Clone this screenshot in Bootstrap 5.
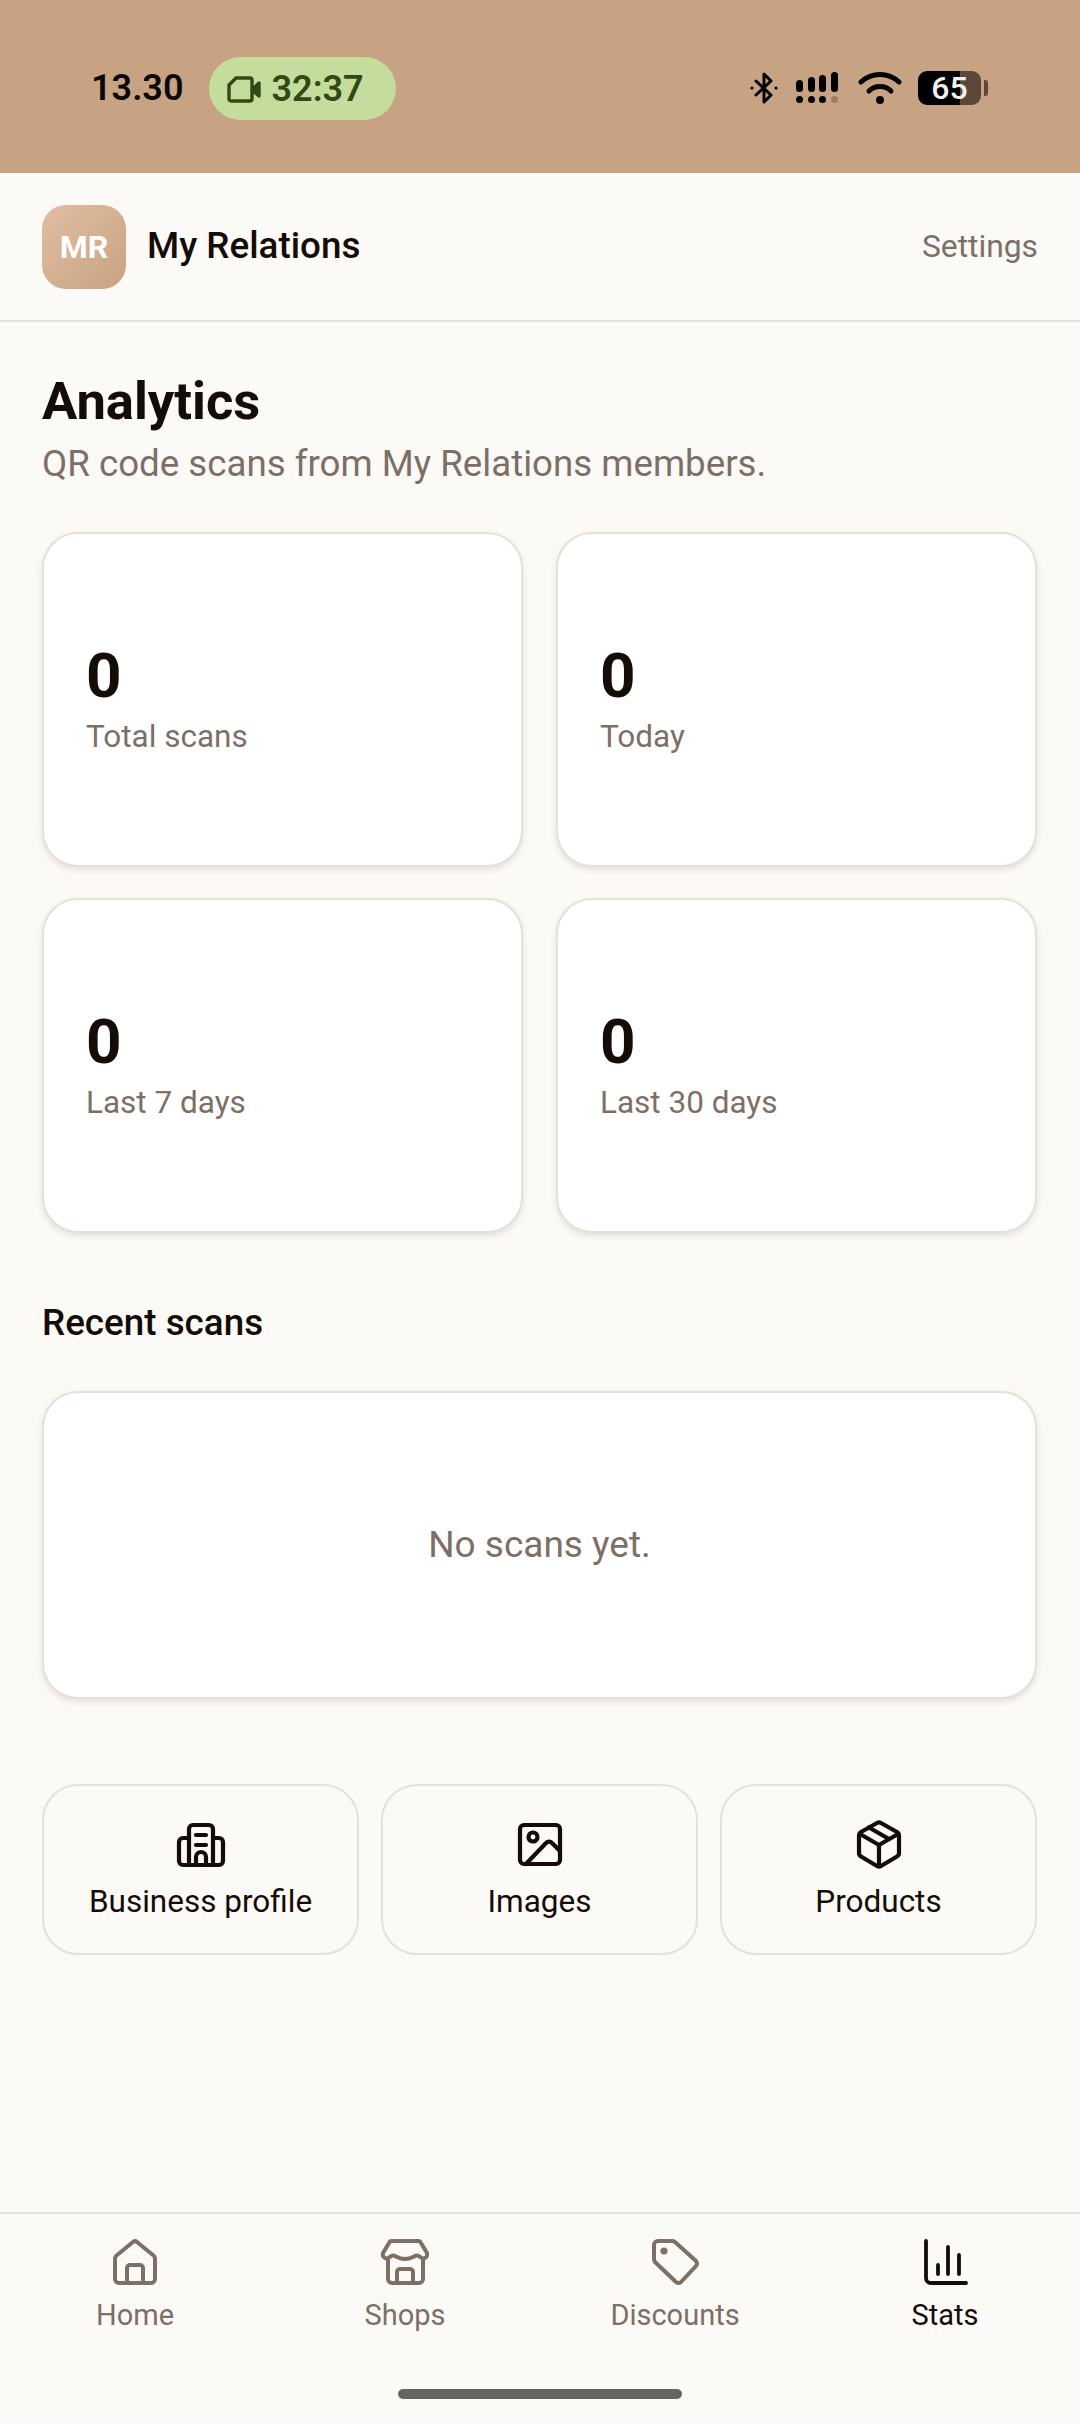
<!DOCTYPE html>
<html lang="en">
<head>
    <meta charset="UTF-8">
    <meta name="viewport" content="width=device-width, initial-scale=1.0">
    <title>My Relations - Analytics</title>
    <link href="https://cdn.jsdelivr.net/npm/bootstrap@5.3.5/dist/css/bootstrap.min.css" rel="stylesheet">
    <style>
        body {
            font-family: Roboto, "Liberation Sans", sans-serif;
            background-color: #fcfaf7;
            color: #140c07;
        }
        svg { display: block; }
        .app-shell { height: 2424px; }
        .status-strip {
            height: 173px;
            background-color: #c7a383;
            padding: 57px 92px 0 91px;
            align-items: flex-start;
        }
        .status-time { font-size: 36px; font-weight: 600; color: #0a0806; line-height: 62px; }
        .call-pill {
            height: 63px;
            width: 187px;
            margin-left: 25px;
            background-color: #c4dd9d;
            color: #2f4a14;
            font-size: 36px;
            font-weight: 600;
            padding-left: 17px;
            gap: 10px;
        }
        .status-icons { gap: 18px; height: 62px; }
        .batt-wrap { margin-left: -2px; }
        .batt-body {
            width: 63px;
            height: 34px;
            border-radius: 9px;
            background: linear-gradient(90deg, #000 0 66%, #5c4838 66% 100%);
            color: #f1f1f1;
            font-size: 32px;
            font-weight: 500;
            line-height: 34px;
            text-align: center;
        }
        .batt-cap { width: 4px; height: 16px; background-color: #5c4838; border-radius: 0 3px 3px 0; margin-left: 3px; }
        .top-head {
            height: 149px;
            padding: 32px 42px 0;
            align-items: flex-start;
            border-bottom: 2px solid #e6e0da;
        }
        .avatar-box {
            width: 84px;
            height: 84px;
            border-radius: 24px;
            background: linear-gradient(135deg, #e1bea2, #c7a383);
            color: #fff;
            font-size: 32px;
            font-weight: 700;
        }
        .brand-name { font-size: 36.8px; font-weight: 500; margin-left: 21px; line-height: 82px; }
        .settings-link { font-size: 31.8px; color: #7d6f66; line-height: 82px; text-decoration: none; }
        .main-pad { padding: 49px 43px 0 42px; }
        .page-title { font-size: 52.5px; font-weight: 700; line-height: 60px; margin: 0; }
        .page-sub { font-size: 36.7px; color: #7d6f66; line-height: 46px; margin: 10px 0 45px; }
        .stat-row { --bs-gutter-x: 33px; --bs-gutter-y: 31px; }
        .stat-card, .empty-card {
            border: 2px solid #e6e0da;
            border-radius: 36px;
            background-color: #fff;
            box-shadow: 0 3px 6px rgba(60, 40, 25, .12);
        }
        .stat-card { height: 335px; padding: 0 42px; }
        .stat-num { font-size: 62px; font-weight: 700; line-height: 72px; margin-top: -2px; }
        .stat-label { font-size: 31.5px; color: #7d6f66; line-height: 40px; margin-top: 5px; }
        .section-head { font-size: 36.8px; font-weight: 500; line-height: 44px; margin: 68px 0 46px; }
        .empty-card { height: 308px; font-size: 37px; color: #7d6f66; }
        .quick-row { gap: 22px; margin-top: 85px; }
        .quick-btn {
            flex: 1 1 0;
            height: 171px;
            border: 2px solid #e6e0da;
            border-radius: 36px;
            padding-top: 32px;
            font-size: 31.5px;
            color: #140c07;
            text-decoration: none;
        }
        .quick-btn span { margin-top: 10px; line-height: 40px; }
        .bottom-nav { height: 212px; border-top: 2px solid #e6e0da; padding-top: 20px; }
        .nav-cell { width: 270px; color: #7d6f66; font-size: 29px; text-decoration: none; line-height: 40px; }
        .nav-cell span { margin-top: 7px; }
        .nav-cell.is-on { color: #140c07; }
        .home-bar { width: 284px; height: 10px; border-radius: 5px; background-color: #646461; margin: 54px auto 0; }
    </style>
</head>
<body>
    <div class="app-shell d-flex flex-column">
        <!-- Phone status bar -->
        <div class="status-strip d-flex">
            <div class="status-time">13.30</div>
            <div class="call-pill d-flex align-items-center rounded-pill">
                <svg width="36" height="36" viewBox="0 0 36 36" fill="none" stroke="#2f4a14" stroke-width="3.4" stroke-linejoin="round"><path d="M10 7H24a2 2 0 0 1 2 2V28a2 2 0 0 1-2 2H5a2 2 0 0 1-2-2V14Z"/><path d="M27 18L33 12V25L27 20Z" fill="#2f4a14"/></svg>
                <span>32:37</span>
            </div>
            <div class="status-icons d-flex align-items-center ms-auto">
                <svg width="28" height="34" viewBox="0 0 28 34" fill="none" stroke="#000" stroke-width="3" stroke-linejoin="round" stroke-linecap="round"><path d="M6 10L21 24L14 31V3L21 10L6 24"/><circle cx="2" cy="17" r="1.6" fill="#000" stroke="none"/><circle cx="26" cy="17" r="1.6" fill="#000" stroke="none"/></svg>
                <svg width="44" height="32" viewBox="0 0 44 32"><g fill="#000"><rect x="0" y="8" width="7" height="12" rx="3.5"/><rect x="12" y="5" width="7" height="15" rx="3.5"/><rect x="23" y="3" width="7" height="17" rx="3.5"/><rect x="35" y="0" width="7" height="20" rx="3.5"/><circle cx="3.5" cy="27.5" r="3.5"/><circle cx="15.5" cy="27.5" r="3.5"/><circle cx="26.5" cy="27.5" r="3.5"/></g><circle cx="38.5" cy="27.5" r="3.5" fill="#9a7f69"/></svg>
                <svg width="44" height="32" viewBox="0 0 44 32" fill="none" stroke="#000" stroke-width="5" stroke-linecap="round"><path d="M3 10C14 0 30 0 41 10"/><path d="M11 19C17 13 27 13 33 19"/><circle cx="22" cy="28" r="4" fill="#000" stroke="none"/></svg>
                <div class="batt-wrap d-flex align-items-center">
                    <div class="batt-body">65</div>
                    <div class="batt-cap"></div>
                </div>
            </div>
        </div>

        <!-- App header -->
        <div class="top-head d-flex justify-content-between">
            <div class="d-flex">
                <div class="avatar-box d-flex align-items-center justify-content-center">MR</div>
                <div class="brand-name">My Relations</div>
            </div>
            <a href="#" class="settings-link">Settings</a>
        </div>

        <div class="main-pad flex-grow-1">
            <h1 class="page-title">Analytics</h1>
            <p class="page-sub">QR code scans from My Relations members.</p>

            <div class="row stat-row">
                <div class="col-6">
                    <div class="stat-card d-flex flex-column justify-content-center">
                        <div class="stat-num">0</div>
                        <div class="stat-label">Total scans</div>
                    </div>
                </div>
                <div class="col-6">
                    <div class="stat-card d-flex flex-column justify-content-center">
                        <div class="stat-num">0</div>
                        <div class="stat-label">Today</div>
                    </div>
                </div>
                <div class="col-6">
                    <div class="stat-card d-flex flex-column justify-content-center">
                        <div class="stat-num">0</div>
                        <div class="stat-label">Last 7 days</div>
                    </div>
                </div>
                <div class="col-6">
                    <div class="stat-card d-flex flex-column justify-content-center">
                        <div class="stat-num">0</div>
                        <div class="stat-label">Last 30 days</div>
                    </div>
                </div>
            </div>

            <div class="section-head">Recent scans</div>
            <div class="empty-card d-flex align-items-center justify-content-center">No scans yet.</div>

            <!-- Quick links -->
            <div class="quick-row d-flex">
                <a href="#" class="quick-btn d-flex flex-column align-items-center">
                    <svg width="54" height="54" viewBox="0 0 54 54" fill="none" stroke="#140c07" stroke-width="4.2" stroke-linecap="round" stroke-linejoin="round"><path d="M15 47V11a4 4 0 0 1 4-4H35a4 4 0 0 1 4 4V47"/><path d="M15 20H9a4 4 0 0 0-4 4V43a4 4 0 0 0 4 4H45a4 4 0 0 0 4-4V24a4 4 0 0 0-4-4H39"/><path d="M22 17H32M22 27H32"/><path d="M22 47V39a5 5 0 0 1 10 0V47"/></svg>
                    <span>Business profile</span>
                </a>
                <a href="#" class="quick-btn d-flex flex-column align-items-center">
                    <svg width="54" height="54" viewBox="0 0 54 54" fill="none" stroke="#140c07" stroke-width="4.2" stroke-linecap="round" stroke-linejoin="round"><rect x="7" y="7" width="40" height="39" rx="4"/><circle cx="20" cy="19" r="4.5"/><path d="M13 46L33 25a4 4 0 0 1 6 0L47 33"/></svg>
                    <span>Images</span>
                </a>
                <a href="#" class="quick-btn d-flex flex-column align-items-center">
                    <svg width="54" height="54" viewBox="0 0 54 54" fill="none" stroke="#140c07" stroke-width="4.2" stroke-linecap="round" stroke-linejoin="round"><path d="M25 5a4 4 0 0 1 4 0L45 14a4 4 0 0 1 2 3.5V35a4 4 0 0 1-2 3.5L29 48a4 4 0 0 1-4 0L9 38.500a4 4 0 0 1-2-3.500V17.500a4 4 0 0 1 2-3.500Z"/><path d="M8 16L27 27L46 16M27 27V48"/><path d="M17 9.500L37 21"/></svg>
                    <span>Products</span>
                </a>
            </div>
        </div>

        <!-- Bottom navigation -->
        <div class="bottom-nav">
            <div class="d-flex">
                <a href="#" class="nav-cell d-flex flex-column align-items-center">
                    <svg width="54" height="54" viewBox="0 0 54 54" fill="none" stroke="#7d6f66" stroke-width="4" stroke-linecap="round" stroke-linejoin="round"><path d="M25 8a3 3 0 0 1 4 0L45.500 21.500a4 4 0 0 1 1.500 3V45a4 4 0 0 1-4 4H11a4 4 0 0 1-4-4V24.500a4 4 0 0 1 1.500-3Z"/><path d="M19 49V34a3 3 0 0 1 3-3H32a3 3 0 0 1 3 3V49"/></svg>
                    <span>Home</span>
                </a>
                <a href="#" class="nav-cell d-flex flex-column align-items-center">
                    <svg width="54" height="54" viewBox="0 0 54 54" fill="none" stroke="#7d6f66" stroke-width="4" stroke-linecap="round" stroke-linejoin="round"><path d="M14 7H40a3 3 0 0 1 3 2L49 19a4 4 0 0 1-2 5C44 26 42 21.500 39 21.500C36 21.500 34 25 27 25C20 25 18 21.500 15 21.500C12 21.500 10 26 7 24a4 4 0 0 1-2-5L11 9a3 3 0 0 1 3-2Z"/><path d="M10 26V45a4 4 0 0 0 4 4H41a4 4 0 0 0 4-4V26"/><path d="M19 49V38a3 3 0 0 1 3-3H32a3 3 0 0 1 3 3V49"/></svg>
                    <span>Shops</span>
                </a>
                <a href="#" class="nav-cell d-flex flex-column align-items-center">
                    <svg width="54" height="54" viewBox="0 0 54 54" fill="none" stroke="#7d6f66" stroke-width="4" stroke-linecap="round" stroke-linejoin="round"><path d="M10 7H24a5 5 0 0 1 3 1L48 27a4 4 0 0 1 0 5L33 48a4 4 0 0 1-5 0L7 28a5 5 0 0 1-1-3V11a4 4 0 0 1 4-4Z"/><circle cx="16" cy="17" r="1.600" fill="#7d6f66"/></svg>
                    <span>Discounts</span>
                </a>
                <a href="#" class="nav-cell is-on d-flex flex-column align-items-center">
                    <svg width="54" height="54" viewBox="0 0 54 54" fill="none" stroke="#140c07" stroke-width="3.800" stroke-linecap="round" stroke-linejoin="round"><path d="M8 7V44a5 5 0 0 0 5 5H48"/><path d="M20 31V40M30 13V40M41 21V40"/></svg>
                    <span>Stats</span>
                </a>
            </div>
            <div class="home-bar"></div>
        </div>
    </div>
    <script src="https://cdn.jsdelivr.net/npm/bootstrap@5.3.5/dist/js/bootstrap.bundle.min.js"></script>
</body>
</html>
